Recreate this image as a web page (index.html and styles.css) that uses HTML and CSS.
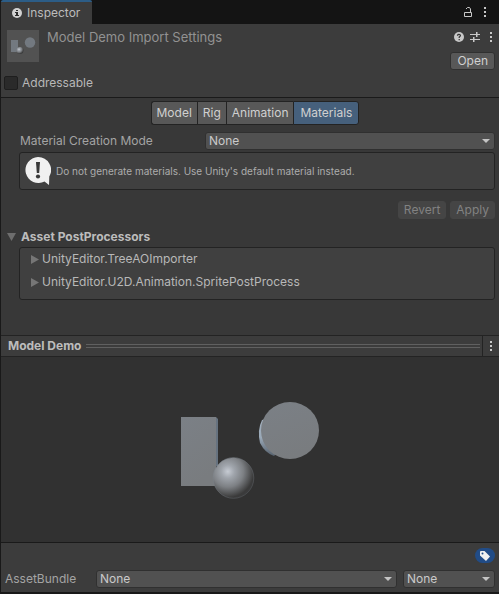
FILE: index.html
```html
<!DOCTYPE html>
<html lang="en">
<head>
<meta charset="utf-8">
<title>Inspector</title>
<link rel="stylesheet" href="styles.css">
</head>
<body>
<div class="inspector">
  <div class="tabbar">
    <div class="tab">
      <svg width="10" height="10" viewBox="0 0 10 10"><circle cx="5" cy="5" r="5" fill="#d2d2d2"/><path d="M4 2h2v1H4zM3 4h3v3h1v1H3V7h1V5H3z" fill="#2c2c2c"/></svg>
      <span>Inspector</span>
    </div>
    <div class="tabbar-tools">
      <button class="icon-button" aria-label="Lock"><svg width="8" height="10" viewBox="0 0 8 10" fill="none" stroke="#c8c8c8"><path d="M.5 5.500h7v4h-7zM6.500 5V2L5.500 .5h-2L2 2"/></svg></button>
      <button class="icon-button" aria-label="Tab menu"><svg width="2" height="10" viewBox="0 0 2 10" fill="#c8c8c8"><path d="M0 0h2v2H0zM0 4h2v2H0zM0 8h2v2H0z"/></svg></button>
    </div>
  </div>

  <header class="asset-header">
    <div class="asset-row">
      <svg class="thumb" width="32" height="32" viewBox="0 0 32 32">
        <rect width="32" height="32" fill="#525252"/>
        <path d="M4 10h7v12H4z" fill="#737980"/>
        <circle cx="23" cy="12.500" r="5.200" fill="#737980"/>
        <circle cx="13" cy="20.500" r="3.500" fill="url(#ball)"/>
      </svg>
      <h1 class="asset-title">Model Demo Import Settings</h1>
      <div class="asset-actions">
        <div class="header-icons">
          <button class="icon-button" aria-label="Help"><svg width="10" height="10" viewBox="0 0 10 10"><circle cx="5" cy="5" r="5" fill="#c8c8c8"/><path d="M3.500 3.800V3.300Q3.700 2.300 5 2.300T6.500 3.500Q6.500 4.300 5.200 5V6M5.200 7v1.200" fill="none" stroke="#333" stroke-width="1.200"/></svg></button>
          <button class="icon-button" aria-label="Presets"><svg width="10" height="10" viewBox="0 0 10 10" fill="#c8c8c8"><path d="M0 2h6v1H0zM6 0h1.500v2H10v1H7.500v2H6zM0 7h3v1H0zM3 5h1.500v2H10v1H4.500v2H3z"/></svg></button>
          <button class="icon-button header-more" aria-label="More"><svg width="2" height="10" viewBox="0 0 2 10" fill="#c8c8c8"><path d="M0 0h2v2H0zM0 4h2v2H0zM0 8h2v2H0z"/></svg></button>
        </div>
        <button class="button">Open</button>
      </div>
    </div>
    <label class="check"><input type="checkbox"><span>Addressable</span></label>
  </header>

  <main class="settings">
    <div class="modes">
      <button class="mode">Model</button>
      <button class="mode">Rig</button>
      <button class="mode">Animation</button>
      <button class="mode mode-active">Materials</button>
    </div>
    <div class="field">
      <label for="creation">Material Creation Mode</label>
      <div class="dropdown"><select id="creation"><option>None</option></select></div>
    </div>
    <div class="help">
      <svg width="26" height="28" viewBox="0 0 26 28"><path d="M13 0a13 13 0 1 0 6.500 24.500L24 28l.3-8.500A13 13 0 0 0 13 0z" fill="#f0f0f0"/><path d="M11 5h4l-.8 11h-2.400z" fill="#383838"/><circle cx="13" cy="19.500" r="2.100" fill="#383838"/></svg>
      <p>Do not generate materials. Use Unity's default material instead.</p>
    </div>
    <div class="apply-row">
      <button class="button" disabled>Revert</button>
      <button class="button" disabled>Apply</button>
    </div>
    <h2 class="foldout"><svg width="9" height="8" viewBox="0 0 9 8"><path d="M0 0h9L4.500 8z" fill="#6e6e6e"/></svg>Asset PostProcessors</h2>
    <ul class="processors">
      <li><svg width="8" height="9" viewBox="0 0 8 9"><path d="M0 0v9l8-4.500z" fill="#767676"/></svg>UnityEditor.TreeAOImporter</li>
      <li><svg width="8" height="9" viewBox="0 0 8 9"><path d="M0 0v9l8-4.500z" fill="#767676"/></svg>UnityEditor.U2D.Animation.SpritePostProcess</li>
    </ul>
  </main>

  <div class="preview-bar">
    <h2>Model Demo</h2>
    <div class="grip"></div>
    <button class="icon-button preview-menu" aria-label="Preview menu"><svg width="2" height="10" viewBox="0 0 2 10" fill="#c8c8c8"><path d="M0 0h2v2H0zM0 4h2v2H0zM0 8h2v2H0z"/></svg></button>
  </div>
  <div class="preview">
    <svg width="140" height="98" viewBox="0 0 140 98">
      <defs>
        <radialGradient id="ball" cx=".36" cy=".34" r=".8">
          <stop offset="0" stop-color="#c6cbd3"/>
          <stop offset=".2" stop-color="#a0a5ac"/>
          <stop offset=".48" stop-color="#7d8084"/>
          <stop offset=".8" stop-color="#3a3a3a"/>
          <stop offset="1" stop-color="#3c3e41"/>
        </radialGradient>
        <linearGradient id="rim" x1="0" y1="0" x2="1" y2="1">
          <stop offset="0" stop-color="#8f979f"/>
          <stop offset=".5" stop-color="#6b7076"/>
          <stop offset="1" stop-color="#4a4c4f"/>
        </linearGradient>
        <linearGradient id="face" x1="0" y1="0" x2=".4" y2="1">
          <stop offset="0" stop-color="#7b8086"/>
          <stop offset="1" stop-color="#797c7f"/>
        </linearGradient>
        <linearGradient id="edge" x1="0" y1="0" x2="0" y2="1">
          <stop offset="0" stop-color="#a3b0bd"/>
          <stop offset=".5" stop-color="#9aa9b8"/>
          <stop offset="1" stop-color="#56616d"/>
        </linearGradient>
      </defs>
      <path d="M35 15h1l2 2v47h-3z" fill="#66727f"/>
      <path d="M1 15h35v69H1z" fill="url(#face)"/>
      <path d="M82 18q-5 10-2 23 5 10 14 13l4-4-12-33z" fill="url(#edge)"/>
      <ellipse cx="110" cy="28.500" rx="29" ry="28.500" fill="url(#face)"/>
      <circle cx="53.500" cy="76" r="20.300" fill="url(#ball)" stroke="url(#rim)" stroke-width=".6"/>
    </svg>
  </div>

  <footer class="bundle">
    <button class="label-button" aria-label="Asset labels"><svg width="10" height="10" viewBox="0 0 10 10"><path d="M0 1q0-1 1-1h3.500L10 5.500 6 10 0 4.500z" fill="#f0f0f0"/><circle cx="2.500" cy="2.500" r="1" fill="#214c87"/></svg></button>
    <div class="bundle-row">
      <label for="bundle">AssetBundle</label>
      <div class="dropdown"><select id="bundle"><option>None</option></select></div>
      <div class="dropdown"><select aria-label="Variant"><option>None</option></select></div>
    </div>
  </footer>
</div>
</body>
</html>
```
FILE: styles.css
```css
* { box-sizing: border-box; }

body {
  margin: 0;
  background: #191919;
  color: #b8b8b8;
  font: 12px/18px Inter, sans-serif;
}

h1, h2, p, ul { margin: 0; padding: 0; font: inherit; }
svg { display: block; flex: none; }
button, select { font: inherit; color: inherit; margin: 0; }

.inspector {
  display: flex;
  flex-direction: column;
  min-height: 100vh;
  padding-left: 1px;
  border-bottom: 2px solid #191919;
}

.icon-button {
  display: flex;
  padding: 0;
  border: 0;
  background: none;
}

.tabbar {
  display: flex;
  justify-content: space-between;
  height: 24px;
  background: #141414;
}

.tab {
  display: flex;
  align-items: center;
  gap: 5px;
  padding: 0 12px 0 11px;
  border-top: 2px solid #2c5d87;
  border-radius: 2px 2px 0 0;
  background: #3c3c3c;
  color: #bdbdbd;
}

.tabbar-tools {
  display: flex;
  align-items: center;
  gap: 12px;
  padding-right: 13px;
}

.asset-header {
  padding: 4px;
  background: #3c3c3c;
  border-bottom: 1px solid #1a1a1a;
}

.asset-row {
  display: flex;
  min-height: 45px;
}

.thumb { margin: 2px 8px 0 2px; }

.asset-title {
  flex: 1;
  color: #929292;
  font-size: 13px;
}

.asset-actions {
  display: flex;
  flex-direction: column;
  align-items: flex-end;
  gap: 6px;
}

.header-icons {
  display: flex;
  align-items: center;
  gap: 6px;
  height: 18px;
  padding-right: 3px;
}

.header-more { margin-left: 4px; }

.button {
  height: 18px;
  padding: 0 6px;
  border: 1px solid #303030;
  border-radius: 3px;
  background: #585858;
  color: #d0d0d0;
  line-height: 16px;
}

.button:disabled {
  padding: 0 5px;
  border-color: #454545;
  background: #454545;
  color: #828282;
}

.check {
  display: flex;
  align-items: center;
  gap: 4px;
  height: 20px;
}

.check input {
  appearance: none;
  width: 14px;
  height: 14px;
  margin: 0 0 0 -1px;
  border: 1px solid #1e1e1e;
  border-radius: 2px;
  background: #2a2a2a;
}

.settings {
  padding: 3px 4px 35px 18px;
  background: #383838;
}

.modes {
  display: flex;
  justify-content: center;
  padding-right: 4px;
  margin-bottom: 7px;
}

.mode {
  height: 24px;
  padding: 0 5px;
  border: 1px solid #232323;
  border-right-width: 0;
  background: #585858;
  color: #d0d0d0;
}

.mode:first-child { border-radius: 3px 0 0 3px; }

.mode-active {
  padding: 0 6px;
  border-right-width: 1px;
  border-radius: 0 3px 3px 0;
  background: #46607c;
}

.field {
  display: grid;
  grid-template-columns: 185px 1fr;
  gap: 1px;
  margin-bottom: 2px;
}

.field label { padding-left: 1px; color: #a4a4a4; }

.dropdown { position: relative; }

.dropdown::after {
  content: "";
  position: absolute;
  top: 7px;
  right: 5px;
  width: 8px;
  height: 4px;
  background: #c4c4c4;
  clip-path: polygon(0 0, 100% 0, 50% 100%);
  pointer-events: none;
}

.dropdown select {
  appearance: none;
  display: block;
  width: 100%;
  height: 18px;
  padding: 0 18px 0 3px;
  border: 1px solid #303030;
  border-radius: 3px;
  background: #515151;
  color: #cacaca;
  line-height: 16px;
}

.help {
  display: flex;
  align-items: center;
  gap: 5px;
  height: 38px;
  padding: 0 5px;
  border: 1px solid #232323;
  border-radius: 3px;
  background: #404040;
  color: #acacac;
  font-size: 10px;
}

.apply-row {
  display: flex;
  justify-content: flex-end;
  gap: 4px;
  padding: 11px 0 9px;
}

.foldout {
  display: flex;
  align-items: center;
  gap: 5px;
  margin-left: -12px;
  padding-bottom: 1px;
  color: #bcbcbc;
  font-weight: 700;
}

.processors {
  display: flex;
  flex-direction: column;
  gap: 5px;
  padding: 2px 11px 8px;
  border: 1px solid #232323;
  border-radius: 3px;
  background: #404040;
  list-style: none;
}

.processors li {
  display: flex;
  align-items: center;
  gap: 3px;
}

.preview-bar {
  display: flex;
  align-items: center;
  height: 22px;
  padding-left: 7px;
  border: solid #232323;
  border-width: 1px 0;
  background: #3c3c3c;
}

.preview-bar h2 {
  color: #bcbcbc;
  font-weight: 700;
}

.grip {
  flex: 1;
  height: 4px;
  margin: 0 2px 0 5px;
  border: solid #606060;
  border-width: 1px 0;
}

.preview-menu {
  align-items: center;
  align-self: stretch;
  padding: 0 7px;
  border-left: 1px solid #232323;
}

.preview {
  display: flex;
  flex: 1;
  align-items: center;
  justify-content: center;
  padding-top: 2px;
  background: #313131;
}

.bundle {
  display: flex;
  flex-direction: column;
  align-items: flex-end;
  gap: 7px;
  padding: 5px 4px 4px;
  border-top: 1px solid #1a1a1a;
  background: #3c3c3c;
}

.label-button {
  display: flex;
  align-items: center;
  justify-content: center;
  width: 20px;
  height: 15px;
  padding: 0;
  border: 0;
  border-radius: 8px;
  background: #214c87;
}

.bundle-row {
  display: grid;
  grid-template-columns: 85px 1fr 92px;
  gap: 6px;
  align-self: stretch;
}

.bundle-row label { color: #a4a4a4; }
```
